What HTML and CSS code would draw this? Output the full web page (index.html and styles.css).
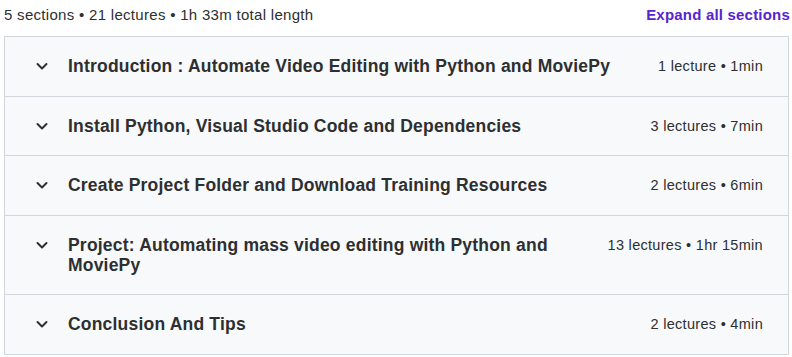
FILE: index.html
```html
<!DOCTYPE html>
<html lang="en">
<head>
    <meta charset="UTF-8">
    <meta name="viewport" content="width=device-width, initial-scale=1.0">
    <title>Course content</title>
    <link rel="stylesheet" href="styles.css">
</head>
<body>
    <div class="curriculum">
        <div class="summary">
            <span class="summary-text">5 sections • 21 lectures • 1h 33m total length</span>
            <button class="expand-all">Expand all sections</button>
        </div>

        <div class="sections">
            <div class="section">
                <svg class="chevron" viewBox="0 0 16 16"><polyline points="3.5,6 8,10.5 12.5,6"></polyline></svg>
                <span class="section-title">Introduction : Automate Video Editing with Python and MoviePy</span>
                <span class="section-meta">1 lecture • 1min</span>
            </div>
            <div class="section">
                <svg class="chevron" viewBox="0 0 16 16"><polyline points="3.5,6 8,10.5 12.5,6"></polyline></svg>
                <span class="section-title">Install Python, Visual Studio Code and Dependencies</span>
                <span class="section-meta">3 lectures • 7min</span>
            </div>
            <div class="section">
                <svg class="chevron" viewBox="0 0 16 16"><polyline points="3.5,6 8,10.5 12.5,6"></polyline></svg>
                <span class="section-title">Create Project Folder and Download Training Resources</span>
                <span class="section-meta">2 lectures • 6min</span>
            </div>
            <div class="section">
                <svg class="chevron" viewBox="0 0 16 16"><polyline points="3.5,6 8,10.5 12.5,6"></polyline></svg>
                <span class="section-title">Project: Automating mass video editing with Python and MoviePy</span>
                <span class="section-meta">13 lectures • 1hr 15min</span>
            </div>
            <div class="section">
                <svg class="chevron" viewBox="0 0 16 16"><polyline points="3.5,6 8,10.5 12.5,6"></polyline></svg>
                <span class="section-title">Conclusion And Tips</span>
                <span class="section-meta">2 lectures • 4min</span>
            </div>
        </div>
    </div>
</body>
</html>
```

FILE: styles.css
```css
body {
    margin: 0;
    padding: 0 3px 0 4px;
    background-color: #ffffff;
    font-family: 'Liberation Sans', Arial, sans-serif;
    color: #2d2f31;
}

.summary {
    display: flex;
    justify-content: space-between;
    align-items: center;
    height: 29px;
    padding-bottom: 7px;
}

.summary-text {
    font-size: 15px;
    letter-spacing: 0.3px;
}

.expand-all {
    background: none;
    border: none;
    padding: 0;
    font-family: inherit;
    font-size: 15px;
    font-weight: bold;
    letter-spacing: 0.2px;
    color: #5624d0;
    cursor: pointer;
    margin-right: -1px;
}

.sections {
    border: 1px solid #d1d7dc;
}

.section {
    display: flex;
    align-items: flex-start;
    padding: 19px 25px 19.5px 29px;
    background-color: #f7f9fa;
    border-bottom: 1px solid #d1d7dc;
}

.section:last-child {
    border-bottom: none;
}

.chevron {
    width: 16px;
    height: 20px;
    flex-shrink: 0;
    margin-right: 18px;
    fill: none;
    stroke: #2d2f31;
    stroke-width: 2;
    stroke-linecap: round;
    stroke-linejoin: round;
}

.section-title {
    flex: 1;
    font-size: 17.5px;
    font-weight: bold;
    letter-spacing: 0.2px;
    line-height: 20px;
    padding-right: 40px;
}

.section-meta {
    font-size: 14.5px;
    letter-spacing: 0.3px;
    line-height: 20px;
    white-space: nowrap;
}
```
